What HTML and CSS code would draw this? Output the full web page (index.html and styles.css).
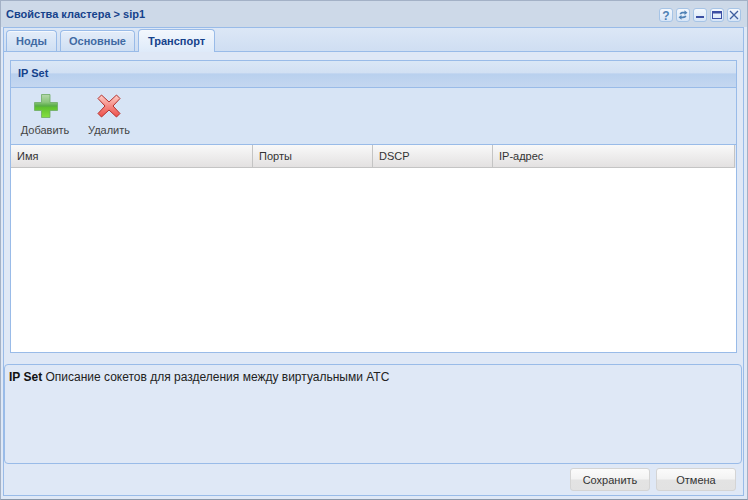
FILE: index.html
```html
<!DOCTYPE html>
<html lang="ru">
<head>
<meta charset="utf-8">
<title>Свойства кластера</title>
<link rel="stylesheet" href="styles.css">
</head>
<body>
<div class="window">
  <header class="titlebar">
    <span class="title">Свойства кластера &gt; sip1</span>
    <div class="tools">
      <span class="tool"><svg viewBox="0 0 12 12"><text x="6" y="10.500" text-anchor="middle" class="q">?</text></svg></span>
      <span class="tool"><svg viewBox="0 0 12 12"><path d="M2.500 5C3 3.300 4.500 2.800 6 2.800H7.500V1.300L10.500 3.700 7.500 6V4.600H6C5 4.600 4.500 4.800 4.100 5.400ZM9.500 7C9 8.700 7.500 9.200 6 9.200H4.500v1.500L1.500 8.300 4.500 6v1.400H6c1 0 1.500-.2 1.900-.8Z" fill="#4f81b5"/></svg></span>
      <span class="tool"><svg viewBox="0 0 12 12"><rect x="2" y="7" width="8" height="2" fill="#3c4fa3"/></svg></span>
      <span class="tool"><svg viewBox="0 0 12 12"><rect x="1.500" y="2.500" width="9" height="7" fill="none" stroke="#3c4fa3" stroke-width="1"/><rect x="1.500" y="2.500" width="9" height="2" fill="#3c4fa3"/></svg></span>
      <span class="tool"><svg viewBox="0 0 12 12"><path d="M2 2l8 8M10 2l-8 8" stroke="#3f5f9f" stroke-width="1.300" fill="none"/></svg></span>
    </div>
  </header>
  <div class="content">
    <div class="tabstrip">
      <span class="tab">Ноды</span>
      <span class="tab tab-second">Основные</span>
      <span class="tab tab-active">Транспорт</span>
    </div>
    <div class="tabbody">
      <section class="panel">
        <div class="panel-head">IP Set</div>
        <div class="toolbar">
          <div class="action action-add">
            <svg class="icon" viewBox="0 0 24 24">
              <defs>
                <linearGradient id="g" x1="0" y1="0" x2="0" y2="1"><stop offset="0" stop-color="#b6d8ac"/><stop offset=".33" stop-color="#8cc67c"/><stop offset=".5" stop-color="#58ab46"/><stop offset=".56" stop-color="#5fc030"/><stop offset="1" stop-color="#86e040"/></linearGradient>
              </defs>
              <path d="M7.500 .5h8.500v8h7.500v8H16v7H7.500v-7H.5v-8h7Z" fill="url(#g)" stroke="#6dab63" stroke-width=".8"/>
            </svg>
            <span>Добавить</span>
          </div>
          <div class="action action-del">
            <svg class="icon" viewBox="0 0 24 24">
              <defs>
                <linearGradient id="r" x1="0" y1="0" x2="0" y2="1"><stop offset="0" stop-color="#ffd0ca"/><stop offset=".5" stop-color="#f58a84"/><stop offset="1" stop-color="#ee4f49"/></linearGradient>
              </defs>
              <path d="M4.500 1 12 8 19.500 1l3.500 3.500L16 12l7 7.500L19.500 23 12 16 4.500 23 1 19.500 8 12 1 4.500Z" fill="url(#r)" stroke="#b3302c" stroke-width="1" stroke-linejoin="round"/>
            </svg>
            <span>Удалить</span>
          </div>
        </div>
        <div class="grid-head">
          <div class="col col-name">Имя</div>
          <div class="col col-port">Порты</div>
          <div class="col col-dscp">DSCP</div>
          <div class="col col-ip">IP-адрес</div>
        </div>
        <div class="grid-body"></div>
      </section>
    </div>
    <div class="info"><b>IP Set</b> Описание сокетов для разделения между виртуальными АТС</div>
    <footer class="buttons">
      <button class="btn">Сохранить</button>
      <button class="btn">Отмена</button>
    </footer>
  </div>
</div>
</body>
</html>
```
FILE: styles.css
```css
* { box-sizing: border-box; }
html, body { margin: 0; height: 100%; }
body { font: 11px/13px "Liberation Sans", Arial, sans-serif; color: #333; background: #fff; }
.window {
  width: 748px; height: 500px;
  background: #dfe8f6;
  border: 1px solid #a3b1c6;
  border-bottom-color: #8a97a8;
  display: flex; flex-direction: column;
  padding: 0 3px 3px 2px;
}
.titlebar {
  margin: 0 -3px 0 -2px;
  height: 26px; flex: none;
  background: #cdd9e8;
  display: flex; align-items: center; justify-content: space-between;
  padding: 0 5px;
}
.title { font-weight: bold; color: #15428b; font-size: 11px; }
.tools { display: flex; gap: 3px; margin-top: 2px; padding-right: 1px; }
.tool {
  width: 14px; height: 14px;
  background: linear-gradient(#f4f8fd, #d6e5f7);
  border: 1px solid #a6c4e6; border-radius: 3px;
  display: block;
}
.tool svg { display: block; width: 12px; height: 12px; }
.q { font: bold 12px "Liberation Sans", sans-serif; fill: #4f81b5; }
.content {
  flex: 1;
  min-height: 0;
  border: 1px solid #99bbe8;
  display: flex; flex-direction: column;
}
.tabstrip {
  height: 24px; flex: none;
  background: linear-gradient(#dce7f6, #cfdef2);
  border-bottom: 1px solid #99bbe8;
  display: flex; align-items: flex-end;
  padding-left: 2px;
  gap: 3px;
}
.tab {
  height: 21px; width: 51px;
  border: 1px solid #99bbe8; border-bottom: 0;
  border-radius: 4px 4px 0 0;
  background: linear-gradient(#e4edf9, #cfdff3);
  box-shadow: inset 0 1px 0 #f4f8fd;
  color: #416aa3; font-weight: bold;
  text-align: center; line-height: 21px;
}
.tab-second { width: 75px; }
.tab-active {
  width: 77px; height: 23px; line-height: 23px;
  margin-bottom: -1px;
  background: linear-gradient(#f2f7fd, #deeaf9);
  color: #15428b;
}
.tabbody {
  flex: none;
  height: 312px;
  padding: 8px 6px 11px 6px;
  display: flex;
}
.panel { flex: 1; display: flex; flex-direction: column; border: 1px solid #99bbe8; }
.panel-head {
  height: 27px; flex: none;
  background: linear-gradient(#dae7f6 0, #d2e0f3 45%, #b9d0ee 50%, #c4d7f0 100%);
  border-bottom: 1px solid #99bbe8;
  color: #15428b; font-weight: bold;
  padding: 6px 7px 0;
}
.toolbar {
  height: 57px; flex: none;
  background: #d7e4f5;
  border-bottom: 1px solid #99bbe8;
  display: flex;
  padding: 6px 0 0 9px;
  gap: 17px;
}
.action { display: flex; flex-direction: column; align-items: center; color: #444; }
.action-add { width: 50px; }
.action-del { width: 44px; }
.action .icon { width: 24px; height: 24px; display: block; margin-bottom: 6px; }
.action-add .icon { margin-left: 2px; }
.grid-head {
  height: 23px; flex: none;
  display: flex;
  background: linear-gradient(#f9f9f9, #e3e1e1);
  border-bottom: 1px solid #c4c4c4;
  border-right: 1px solid #c4c4c4;
  margin-right: 1px;
  color: #333;
}
.col { padding: 5px 6px 0; border-right: 1px solid #c4c4c4; }
.col:last-child { border-right: 0; }
.col-name { width: 242px; }
.col-port { width: 120px; }
.col-dscp { width: 120px; }
.col-ip { flex: 1; }
.grid-body { flex: 1; background: #fff; }
.info {
  margin-right: 1px;
  height: 100px; flex: none;
  border: 1px solid #99bbe8; border-radius: 4px;
  background: #dfe8f6;
  padding: 5px 4px;
  font-size: 12px; line-height: 14px;
  color: #222;
}
.info b { color: #111; }
.buttons {
  flex: 1;
  display: flex; justify-content: flex-end; align-items: flex-start;
  gap: 6px;
  padding: 4px 7px 0 0;
}
.btn {
  width: 80px; height: 23px;
  font: 11px "Liberation Sans", Arial, sans-serif; color: #333;
  border: 1px solid #d4d4d4; border-radius: 3px;
  background: linear-gradient(#fbfbfb 0, #f3f3f3 48%, #e3e3e3 52%, #e2e2e2 100%);
  padding: 0;
}
```
